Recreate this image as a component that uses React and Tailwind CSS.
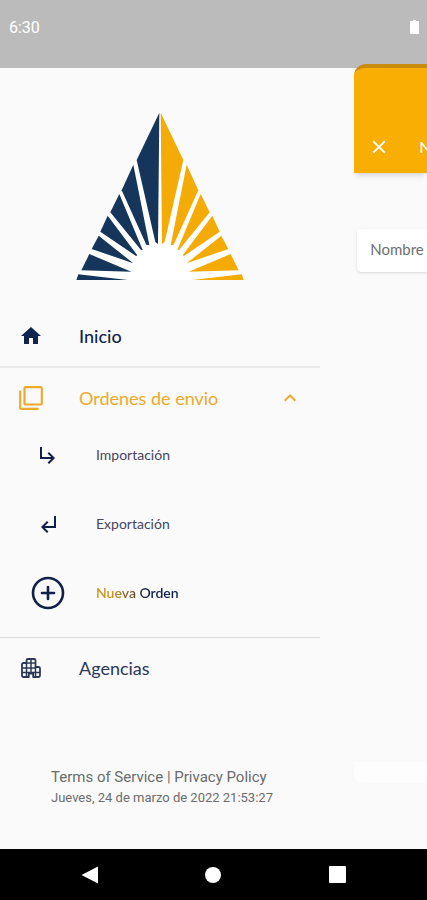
import { useState } from "react";
import {
  MdHome,
  MdOutlineFilterNone,
  MdKeyboardArrowUp,
  MdSubdirectoryArrowRight,
  MdSubdirectoryArrowLeft,
  MdClose,
} from "react-icons/md";
import { CirclePlus } from "lucide-react";

// One half of the logo, the other one is mirrored
const blades = [
  "300,36 232,178 288,424 296,430",
  "222,192 187,269 261,432 270,434",
  "180,280 153,335 245,448 250,448",
  "145,345 123,393 230,466 234,464",
  "118,405 97,445 222,488",
  "90,460 66,509 216,513",
  "57,521 51,538 205,538",
];

const Logo = () => (
  <svg viewBox="50 34 504 506" className="w-[168px]" role="img" aria-label="Logo">
    <polygon points="302,36 51,538 553,538" fill="#fff" />
    <g fill="#15355b">
      {blades.map((points) => (
        <polygon key={points} points={points} />
      ))}
    </g>
    <g fill="#f4ab06" transform="translate(604 0) scale(-1 1)">
      {blades.map((points) => (
        <polygon key={points} points={points} />
      ))}
    </g>
  </svg>
);

// Building with rounded corners
const AgencyIcon = () => (
  <svg viewBox="0 0 20 20" className="size-5" fill="none" stroke="currentColor" strokeWidth="1.8" strokeLinejoin="round" aria-hidden="true">
    <path d="M5.5 5V2.5a1.5 1.5 0 0 1 1.5-1.5h6a1.5 1.5 0 0 1 1.5 1.5V9H17.500a1.500 1.500 0 0 1 1.500 1.500v7a1.500 1.500 0 0 1-1.500 1.500H12.200V15.500H7.800V19H2.500A1.500 1.500 0 0 1 1 17.500V6.500A1.500 1.500 0 0 1 2.500 5z" />
    <path d="M5.500 5v14M10 1v14.500M14.500 9v10M5.500 5h9M1 10h13.500M1 14.500h18" strokeWidth="1.500" />
  </svg>
);

// Top level entry of the drawer
const MenuItem = ({ icon, label, className, ...rest }) => (
  <button type="button" className={`flex h-[60px] w-full items-center text-left text-lg ${className}`} {...rest}>
    <span className="flex w-[62px] justify-center">{icon}</span>
    <span className="ml-[17px] flex-1">{label}</span>
  </button>
);

// Entry inside the "Ordenes de envio" group
const SubItem = ({ icon, children }) => (
  <li>
    <button type="button" className="flex h-[54px] w-full items-center text-left text-sm text-[#45465c]">
      <span className="flex w-24 justify-center text-[#10204a]">{icon}</span>
      {children}
    </button>
  </li>
);

const Drawer = () => {
  const [open, setOpen] = useState(true);

  return (
    <aside className="flex w-3/4 flex-col pt-11">
      <div className="flex justify-center">
        <Logo />
      </div>

      <nav className="mt-[25px]">
        <MenuItem icon={<MdHome size={24} />} label="Inicio" className="font-medium text-[#10254d]" />

        <div className="border-t-2 border-[#ebebeb]">
          <button
            type="button"
            onClick={() => setOpen(!open)}
            aria-expanded={open}
            className="flex h-[60px] w-full items-center text-left text-lg text-[#eda92d]"
          >
            <span className="flex w-[62px] justify-center">
              <MdOutlineFilterNone size={26} />
            </span>
            <span className="ml-[17px] flex-1">Ordenes de envio</span>
            <MdKeyboardArrowUp size={24} className="mr-[18px]" />
          </button>
          {open && (
            <ul className="flex flex-col gap-[15px] pb-[17px]">
              <SubItem icon={<MdSubdirectoryArrowRight size={24} />}>Importación</SubItem>
              <SubItem icon={<MdSubdirectoryArrowLeft size={24} />}>Exportación</SubItem>
              <SubItem icon={<CirclePlus size={36} strokeWidth={1.75} />}>
                <span className="bg-linear-to-r from-[#c8951f] from-20% via-[#5b4a30] via-48% to-[#10204a] to-60% bg-clip-text font-semibold text-transparent">
                  Nueva Orden
                </span>
              </SubItem>
            </ul>
          )}
        </div>

        <div className="border-t border-[#dcdcdc]">
          <MenuItem icon={<AgencyIcon />} label="Agencias" className="text-[#2b3858]" />
        </div>
      </nav>

      <footer className="mt-[68px] pb-10 pl-[51px] font-['Roboto',sans-serif] text-[#6b6b6b]">
        <p className="text-[15px] leading-[22px] whitespace-nowrap">
          <a href="#terms">Terms of Service</a> | <a href="#privacy">Privacy Policy</a>
        </p>
        <p className="text-[13px] leading-5 whitespace-nowrap">Jueves, 24 de marzo de 2022 21:53:27</p>
      </footer>
    </aside>
  );
};

// The page that slides to the right while the drawer is open
const OrderPage = () => (
  <section className="-mt-1 ml-[34px] flex min-w-0 flex-1 flex-col overflow-hidden">
    <header className="flex h-[109px] items-end rounded-tl-xl border-t-4 border-[#c98c0c] bg-[#f9ae03] pb-[15px] pl-[14px] text-white shadow-md">
      <button type="button" aria-label="Cerrar">
        <MdClose size={22} />
      </button>
      <h1 className="ml-[29px] text-base leading-[22px] font-medium whitespace-nowrap">Nueva Orden</h1>
    </header>
    <form className="mt-14 ml-[3px]">
      <input
        type="text"
        aria-label="Nombre"
        placeholder="Nombre"
        className="h-[43px] w-64 rounded-sm bg-white pb-1 pl-[13px] text-[15px] text-[#707070] shadow-sm outline-none placeholder:text-[#707070]"
      />
    </form>
    <div className="mt-auto mb-[66px] h-[21px] rounded-bl-lg bg-[#fdfdfd]" />
  </section>
);

const App = () => (
  <div className="flex min-h-screen flex-col overflow-hidden bg-[#fafafa] font-['Lato',sans-serif]">
    <div className="flex h-[68px] items-start justify-between bg-[#bbbbbb] pt-[18px] pr-2 pl-[9px] font-['Roboto',sans-serif] text-base leading-5 text-white">
      <span>6:30</span>
      <svg viewBox="0 0 9 14" className="mt-0.5 h-[14px] w-[9px]" fill="#fff" aria-hidden="true">
        <path d="M3 0h3v1h2a1 1 0 0 1 1 1v11a1 1 0 0 1-1 1H1a1 1 0 0 1-1-1V2a1 1 0 0 1 1-1h2z" />
      </svg>
    </div>

    <main className="flex flex-1">
      <Drawer />
      <OrderPage />
    </main>

    {/* Android navigation bar */}
    <div className="grid h-[51px] grid-cols-3 place-items-center bg-black px-7 text-white">
      <button type="button" aria-label="Atrás">
        <svg viewBox="0 0 18 18" className="size-[18px]" fill="currentColor">
          <path d="M17 0.5v17L0.5 9z" />
        </svg>
      </button>
      <button type="button" aria-label="Inicio del sistema" className="size-4 rounded-full bg-white" />
      <button type="button" aria-label="Recientes" className="size-[17px] rounded-[1px] bg-white" />
    </div>
  </div>
);

export default App;
